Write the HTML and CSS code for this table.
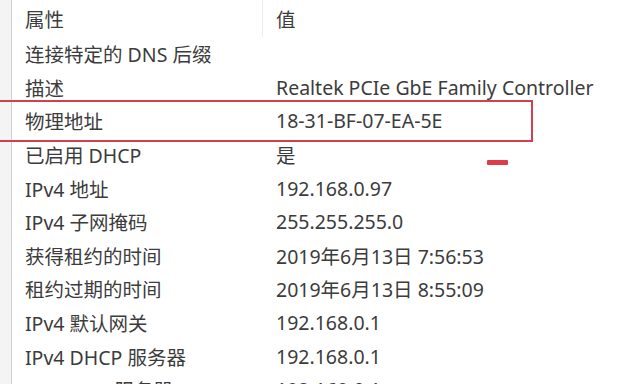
FILE: index.html
```html
<!DOCTYPE html>
<html lang="zh-CN">
<head>
<meta charset="utf-8">
<link rel="stylesheet" href="styles.css">
</head>
<body>
<div class="pane">
  <div class="gutter"></div>
  <div class="list">
    <div class="row head"><div class="k">属性</div><div class="v">值</div></div>
    <div class="row first"><div class="k">连接特定的 DNS 后缀</div><div class="v"></div></div>
    <div class="row"><div class="k">描述</div><div class="v">Realtek PCIe GbE Family Controller</div></div>
    <div class="row"><div class="k">物理地址</div><div class="v">18-31-BF-07-EA-5E</div></div>
    <div class="row"><div class="k">已启用 DHCP</div><div class="v">是</div></div>
    <div class="row"><div class="k">IPv4 地址</div><div class="v">192.168.0.97</div></div>
    <div class="row"><div class="k">IPv4 子网掩码</div><div class="v">255.255.255.0</div></div>
    <div class="row"><div class="k">获得租约的时间</div><div class="v">2019年6月13日 7:56:53</div></div>
    <div class="row"><div class="k">租约过期的时间</div><div class="v">2019年6月13日 8:55:09</div></div>
    <div class="row"><div class="k">IPv4 默认网关</div><div class="v">192.168.0.1</div></div>
    <div class="row"><div class="k">IPv4 DHCP 服务器</div><div class="v">192.168.0.1</div></div>
    <div class="row"><div class="k">IPv4 DNS 服务器</div><div class="v">192.168.0.1</div></div>
  </div>
  <div class="highlight"></div>
  <div class="mark"></div>
</div>
</body>
</html>
```
FILE: styles.css
```css
html, body {
  margin: 0;
  padding: 0;
  background: #ffffff;
  overflow: hidden;
}
body {
  width: 620px;
  height: 384px;
}
.pane {
  position: relative;
  display: flex;
  width: 620px;
  height: 384px;
  overflow: hidden;
  font-family: "Noto Sans", "Noto Sans CJK SC", sans-serif;
  font-size: 19.5px;
  color: #3c3c3c;
}
.gutter {
  width: 11px;
  flex: none;
  background: #f4f4f4;
  border-right: 1px solid #cfcfcf;
}
.list {
  flex: 1;
  display: flex;
  flex-direction: column;
}
.row {
  flex: none;
  display: grid;
  grid-template-columns: 251px 1fr;
  height: 33.6px;
  align-items: center;
  white-space: nowrap;
}
.row.head {
  height: 37px;
  align-items: stretch;
}
.row.head .k {
  border-right: 1px solid #ececec;
  display: flex;
  align-items: center;
}
.row.head .v {
  display: flex;
  align-items: center;
}
.k {
  padding-left: 13px;
}
.v {
  padding-left: 13px;
}
.highlight {
  position: absolute;
  left: -2px;
  top: 100px;
  width: 531px;
  height: 38px;
  border: 2px solid #d2404e;
}
.mark {
  position: absolute;
  left: 487px;
  top: 160px;
  width: 21px;
  height: 5px;
  background: #de3a4a;
  border-radius: 1px;
}
```
